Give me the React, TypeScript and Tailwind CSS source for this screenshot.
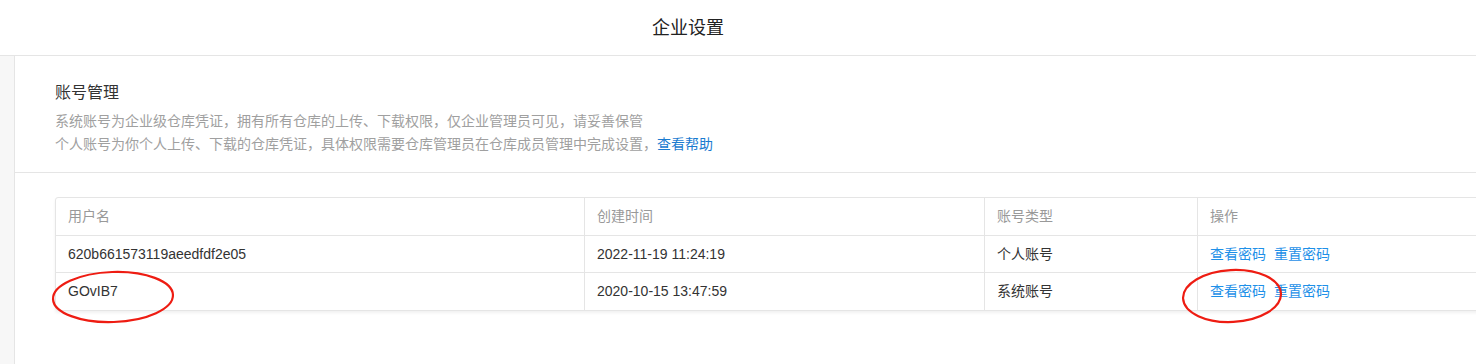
import React from 'react';

interface Account {
    username: string;
    createdAt: string;
    type: string;
}

const accounts: Account[] = [
    { username: '620b661573119aeedfdf2e05', createdAt: '2022-11-19 11:24:19', type: '个人账号' },
    { username: 'GOvIB7', createdAt: '2020-10-15 13:47:59', type: '系统账号' },
];

const font = { fontFamily: '"Liberation Sans", "Noto Sans CJK SC", sans-serif' };

const App: React.FC = () => {
    return (
        <div className="relative w-full h-[364px] overflow-hidden bg-white text-[#333]" style={font}>
            {/* header */}
            <div className="h-[56px] border-b border-[#e5e5e5] flex items-center">
                <div className="w-[1376px] text-center text-[18px] leading-[24px] text-[#222]">企业设置</div>
            </div>

            <div className="flex h-[308px]">
                <div className="w-[15px] shrink-0 bg-[#f7f7f7] border-r border-[#e5e5e5]" />

                <div className="flex-1 min-w-0">
                    {/* account section intro */}
                    <div className="pl-[40px] pt-[25px] pb-[16px] border-b border-[#e5e5e5]">
                        <h2 className="text-[16px] leading-[24px] text-[#333]">账号管理</h2>
                        <div className="mt-[5px] text-[14px] leading-[23px] text-[#a0a0a0]">
                            <p>系统账号为企业级仓库凭证，拥有所有仓库的上传、下载权限，仅企业管理员可见，请妥善保管</p>
                            <p>
                                个人账号为你个人上传、下载的仓库凭证，具体权限需要仓库管理员在仓库成员管理中完成设置，
                                <a className="text-[#1a7bd0] cursor-pointer">查看帮助</a>
                            </p>
                        </div>
                    </div>

                    {/* account table */}
                    <div className="ml-[40px] mt-[24px] w-[1480px] rounded-[3px] border border-[#e5e5e5] shadow-[0_2px_3px_rgba(0,0,0,0.06)] text-[14px]">
                        <div className="flex h-[38px] items-center text-[#999] border-b border-[#e5e5e5]">
                            <div className="w-[529px] h-full flex items-center px-[12px] border-r border-[#e5e5e5]">用户名</div>
                            <div className="w-[400px] h-full flex items-center px-[12px] border-r border-[#e5e5e5]">创建时间</div>
                            <div className="w-[213px] h-full flex items-center px-[12px] border-r border-[#e5e5e5]">账号类型</div>
                            <div className="flex-1 h-full flex items-center px-[12px]">操作</div>
                        </div>
                        {accounts.map((a, i) => (
                            <div
                                key={a.username}
                                className={`flex h-[37px] items-center text-[#333] ${i < accounts.length - 1 ? 'border-b border-[#e5e5e5]' : ''}`}
                            >
                                <div className="w-[529px] h-full flex items-center px-[12px] border-r border-[#e5e5e5]">{a.username}</div>
                                <div className="w-[400px] h-full flex items-center px-[12px] border-r border-[#e5e5e5]">{a.createdAt}</div>
                                <div className="w-[213px] h-full flex items-center px-[12px] border-r border-[#e5e5e5]">{a.type}</div>
                                <div className="flex-1 h-full flex items-center gap-[8px] px-[12px] text-[#1e90e8]">
                                    <a className="cursor-pointer">查看密码</a>
                                    <a className="cursor-pointer">重置密码</a>
                                </div>
                            </div>
                        ))}
                    </div>
                </div>
            </div>

            {/* red annotation circles */}
            <svg className="absolute left-0 top-0 pointer-events-none" width="1476" height="364">
                <ellipse cx="113" cy="297" rx="60" ry="25" fill="none" stroke="#ee1c12" strokeWidth="2.2" transform="rotate(-2 113 297)" />
                <ellipse cx="1232" cy="296" rx="49" ry="26" fill="none" stroke="#ee1c12" strokeWidth="2.2" transform="rotate(-3 1232 296)" />
            </svg>
        </div>
    );
};

export default App;
